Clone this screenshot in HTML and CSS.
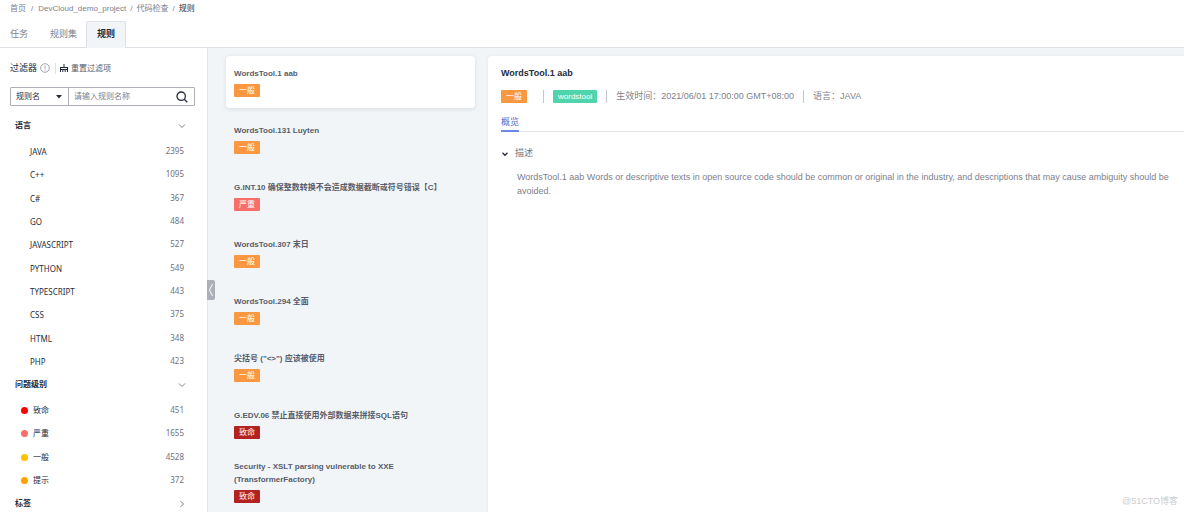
FILE: index.html
```html
<!DOCTYPE html>
<html lang="zh-CN">
<head>
<meta charset="utf-8">
<meta name="viewport" content="width=device-width, initial-scale=1">
<title>规则</title>
<link rel="stylesheet" href="styles.css">
</head>
<body class="page">
<header class="header">
  <nav class="crumbs">
    <a href="#">首页</a><span>/</span><a href="#">DevCloud_demo_project</a><span>/</span><a href="#">代码检查</a><span>/</span><span class="crumb-current">规则</span>
  </nav>
  <nav class="tabs">
    <a class="tab" href="#">任务</a>
    <a class="tab" href="#">规则集</a>
    <a class="tab tab-active" href="#">规则</a>
  </nav>
</header>
<div class="body">
  <aside class="sidebar">
    <div class="filter-head">
      <span class="filter-title">过滤器</span>
      <svg class="info" viewBox="0 0 10 10"><circle cx="5" cy="5" r="4.3"/><path d="M5 2.5v3.3M5 6.7v1"/></svg>
      <button class="reset" type="button">
        <svg class="broom" viewBox="0 0 10 10"><path d="M5 1v3.500M1 4.500h8M1.500 4.500v4.500M8.500 4.500v4.500M3.800 6.500v2.500M6.200 6.500v2.500M1.500 6.500h7"/></svg>重置过滤项
      </button>
    </div>
    <form class="search">
      <label class="search-kind">
        <select class="select" aria-label="搜索字段"><option>规则名</option></select>
        <svg class="caret" viewBox="0 0 6 4"><path d="M0 0h6L3 3.500z"/></svg>
      </label>
      <input class="search-input" type="text" aria-label="规则名称" placeholder="请输入规则名称">
      <button class="search-btn" type="button" aria-label="搜索"><svg class="glass" viewBox="0 0 12 12"><circle cx="5.200" cy="5.200" r="4.200"/><path d="M8.300 8.300l3 3"/></svg></button>
    </form>
    <section class="group">
      <button class="group-head" type="button">语言<svg class="chev" viewBox="0 0 8 8"><path d="M1 2.500l3 3 3-3"/></svg></button>
      <ul class="rows rows-lang">
        <li><button class="row" type="button"><span>JAVA</span><span class="count">2395</span></button></li>
        <li><button class="row" type="button"><span>C++</span><span class="count">1095</span></button></li>
        <li><button class="row" type="button"><span>C#</span><span class="count">367</span></button></li>
        <li><button class="row" type="button"><span>GO</span><span class="count">484</span></button></li>
        <li><button class="row" type="button"><span>JAVASCRIPT</span><span class="count">527</span></button></li>
        <li><button class="row" type="button"><span>PYTHON</span><span class="count">549</span></button></li>
        <li><button class="row" type="button"><span>TYPESCRIPT</span><span class="count">443</span></button></li>
        <li><button class="row" type="button"><span>CSS</span><span class="count">375</span></button></li>
        <li><button class="row" type="button"><span>HTML</span><span class="count">348</span></button></li>
        <li><button class="row" type="button"><span>PHP</span><span class="count">423</span></button></li>
      </ul>
    </section>
    <section class="group">
      <button class="group-head" type="button">问题级别<svg class="chev" viewBox="0 0 8 8"><path d="M1 2.500l3 3 3-3"/></svg></button>
      <ul class="rows rows-level">
        <li><button class="row" type="button"><i class="dot dot-fatal"></i><span>致命</span><span class="count">451</span></button></li>
        <li><button class="row" type="button"><i class="dot dot-major"></i><span>严重</span><span class="count">1655</span></button></li>
        <li><button class="row" type="button"><i class="dot dot-minor"></i><span>一般</span><span class="count">4528</span></button></li>
        <li><button class="row" type="button"><i class="dot dot-hint"></i><span>提示</span><span class="count">372</span></button></li>
      </ul>
    </section>
    <section class="group">
      <button class="group-head" type="button">标签<svg class="chev" viewBox="0 0 8 8"><path d="M2.500 1l3 3-3 3"/></svg></button>
    </section>
    <button class="collapse" type="button" aria-label="收起"><svg class="collapse-icon" viewBox="0 0 8 20"><path d="M5.500 4L2.500 10l3 6"/></svg></button>
  </aside>
  <main class="main">
    <ul class="rules">
      <li class="rule rule-active"><h3 class="rule-title">WordsTool.1 aab</h3><span class="badge minor">一般</span></li>
      <li class="rule"><h3 class="rule-title">WordsTool.131 Luyten</h3><span class="badge minor">一般</span></li>
      <li class="rule"><h3 class="rule-title">G.INT.10 确保整数转换不会造成数据截断或符号错误【C】</h3><span class="badge major">严重</span></li>
      <li class="rule"><h3 class="rule-title">WordsTool.307 末日</h3><span class="badge minor">一般</span></li>
      <li class="rule"><h3 class="rule-title">WordsTool.294 全面</h3><span class="badge minor">一般</span></li>
      <li class="rule"><h3 class="rule-title">尖括号 ("&lt;&gt;") 应该被使用</h3><span class="badge minor">一般</span></li>
      <li class="rule"><h3 class="rule-title">G.EDV.06 禁止直接使用外部数据来拼接SQL语句</h3><span class="badge fatal">致命</span></li>
      <li class="rule"><h3 class="rule-title">Security - XSLT parsing vulnerable to XXE (TransformerFactory)</h3><span class="badge fatal">致命</span></li>
    </ul>
    <article class="detail">
      <h2 class="detail-title">WordsTool.1 aab</h2>
      <div class="meta">
        <span class="badge minor meta-level">一般</span>
        <span class="meta-item"><span class="badge tool">wordstool</span></span>
        <span class="meta-item">生效时间：2021/06/01 17:00:00 GMT+08:00</span>
        <span class="meta-item">语言：JAVA</span>
      </div>
      <nav class="subtabs"><a class="subtab" href="#">概览</a></nav>
      <button class="desc-head" type="button"><svg class="desc-chev" viewBox="0 0 8 8"><path d="M1.500 2.800L4 5.300l2.500-2.500"/></svg>描述</button>
      <p class="desc">WordsTool.1 aab Words or descriptive texts in open source code should be common or original in the industry, and descriptions that may cause ambiguity should be avoided.</p>
    </article>
  </main>
</div>
<div class="watermark">@51CTO博客</div>
</body>
</html>
```

FILE: styles.css
```css
* { box-sizing: border-box; }
.page {
  margin: 0;
  height: 100vh;
  display: flex;
  flex-direction: column;
  overflow: hidden;
  position: relative;
  background: #fff;
  color: #575d6c;
  font: 8px/13px "Liberation Sans", "Noto Sans CJK SC", sans-serif;
}
a { color: inherit; text-decoration: none; }
button, input, select { font: inherit; color: inherit; background: none; border: 0; padding: 0; margin: 0; }
ul { list-style: none; margin: 0; padding: 0; }
h2, h3, p { margin: 0; }
svg { display: block; flex: none; fill: none; stroke: currentColor; }

.header { border-bottom: 1px solid #dfe1e6; padding: 2px 10px 0; }
.crumbs { display: flex; gap: 5px; color: #7d818c; }
.crumbs > :nth-child(n+4) { margin-left: -1px; }
.crumb-current { color: #252b3a; }
.tabs { display: flex; font-size: 9px; color: #7d818c; margin: 6px 0 -1px; }
.tab { padding: 7px 11px; }
.tab:first-child { padding-left: 0; }
.tab:nth-child(2) { padding-right: 9px; }
.tab-active { background: #f1f5f8; border: 1px solid #dfe1e6; border-bottom: 0; padding: 6px 10px 7px; color: #252b3a; font-weight: 700; border-radius: 2px 2px 0 0; }

.body { display: flex; flex: 1; min-height: 0; }
.sidebar { position: relative; width: 208px; flex: none; border-right: 1px solid #e3e7eb; padding: 13px 12px 0 10px; }
.filter-head { display: flex; align-items: center; height: 14px; }
.filter-title { font-size: 9px; color: #252b3a; }
.info { width: 10px; height: 10px; margin-left: 3px; color: #8a8e99; stroke-width: .8; }
.reset { display: flex; align-items: center; gap: 2px; border-left: 1px solid #dfe1e6; margin-left: 5px; padding-left: 3px; height: 11px; }
.broom { width: 10px; height: 10px; color: #252b3a; }

.search { display: flex; border: 1px solid #adb0b8; border-radius: 1px; height: 19px; margin: 12px 0 8px; }
.search-kind { position: relative; width: 58px; border-right: 1px solid #adb0b8; flex: none; }
.select { appearance: none; width: 100%; height: 100%; padding-left: 5px; color: #252b3a; }
.caret { position: absolute; right: 6px; top: 7px; width: 6px; height: 4px; fill: #252b3a; stroke: none; pointer-events: none; }
.search-input { flex: 1; min-width: 0; padding: 0 5px; outline: 0; }
.search-input::placeholder { color: #7d818c; }
.search-btn { width: 24px; display: grid; place-items: center; }
.glass { width: 12px; height: 12px; color: #252b3a; stroke-width: 1.3; }

.group-head { display: flex; align-items: center; justify-content: space-between; width: 100%; height: 23px; padding: 0 9px 0 5px; font-weight: 700; color: #252b3a; }
.chev { width: 8px; height: 8px; color: #6c7280; stroke-width: .9; }
.rows { display: grid; grid-auto-rows: 1fr; margin-top: 3px; }
.rows-lang { min-height: 233px; padding-left: 20px; font-family: "Noto Sans", "Noto Sans CJK SC", sans-serif; }
.rows-level { min-height: 93px; padding-left: 11px; }
.row { display: flex; align-items: center; width: 100%; height: 100%; padding-right: 11px; color: #252b3a; }
.count { margin-left: auto; padding-bottom: 2px; color: #6c7280; font-family: "Noto Sans", sans-serif; }
.dot { width: 7px; height: 7px; border-radius: 50%; margin-right: 5px; }
.dot-fatal { background: #f00; }
.dot-major { background: #f66f6a; }
.dot-minor { background: #fdc000; }
.dot-hint { background: #ffa200; }
.collapse { position: absolute; left: 100%; top: 232px; width: 8px; height: 20px; background: #adb0b8; border-radius: 0 2px 2px 0; color: #fff; }
.collapse-icon { width: 8px; height: 20px; }

.main { flex: 1; min-width: 0; display: flex; gap: 13px; padding: 8px 0 0 18px; background: #f1f5f8; }
.rules { width: 249px; flex: none; display: flex; flex-direction: column; gap: 5px; }
.rule { flex: none; height: 52px; display: flex; flex-direction: column; justify-content: center; align-items: flex-start; gap: 4px; padding: 0 66px 0 8px; border-radius: 4px; }
.rule:nth-child(3) { padding-right: 8px; }
.rule-active { background: #fff; box-shadow: 0 1px 4px rgba(37, 43, 58, .12); }
.rule-title { font-size: 8px; line-height: 13px; font-weight: 700; }
.badge { display: inline-block; height: 13px; line-height: 13px; padding: 0 5px; border-radius: 1px; font-size: 8px; color: #fff; }
.minor { background: #fa9841; }
.major { background: #f66f6a; }
.fatal { background: #b12220; }
.tool { background: #50d4ab; }

.detail { flex: 1; min-width: 0; background: #fff; border-radius: 4px 0 0 0; padding: 11px 0 0 13px; font-size: 9px; color: #7d818c; box-shadow: 0 0 4px rgba(37, 43, 58, .06); }
.detail-title { font-size: 9px; line-height: 13px; color: #252b3a; }
.meta { display: flex; align-items: center; margin-top: 8px; height: 16px; }
.meta-level { margin-right: 7px; }
.meta-item { display: flex; align-items: center; height: 13px; padding-left: 9px; margin-left: 9px; border-left: 1px solid #c3c6cc; }
.subtabs { display: flex; border-bottom: 1px solid #e3e5e9; margin-top: 12px; }
.subtab { color: #526ecc; border-bottom: 2px solid #6f88e0; margin-bottom: -1px; padding-bottom: 1px; }
.desc-head { display: flex; align-items: center; gap: 6px; margin-top: 15px; color: #6c7280; }
.desc-chev { width: 8px; height: 8px; color: #252b3a; stroke-width: 1.3; }
.desc { margin: 10px 8px 0 16px; line-height: 14px; }
.watermark { position: absolute; right: 6px; bottom: 4px; font-size: 9px; color: #ccc; }
```
